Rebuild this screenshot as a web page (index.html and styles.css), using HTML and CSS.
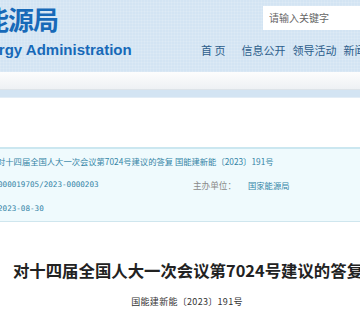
FILE: index.html
```html
<!DOCTYPE html>
<html lang="zh-CN">
<head>
<meta charset="UTF-8">
<meta name="viewport" content="width=device-width, initial-scale=1.0">
<title>对十四届全国人大一次会议第7024号建议的答复</title>
<link rel="stylesheet" href="styles.css">
</head>
<body>

<div class="header">
    <div class="logo">
        <div class="logo-cn">国家能源局</div>
        <div class="logo-en">National Energy Administration</div>
    </div>
    <div class="header-right">
        <div class="search">
            <input type="text" placeholder="请输入关键字">
        </div>
        <ul class="nav">
            <li class="nav-home">首 页</li>
            <li>信息公开</li>
            <li>领导活动</li>
            <li>新闻发布</li>
        </ul>
    </div>
</div>
<div class="band-white"></div>
<div class="band-blue"></div>

<div class="content">
    <div class="info-box">
        <div class="info-row info-full">对十四届全国人大一次会议第7024号建议的答复 国能建新能〔2023〕191号</div>
        <div class="info-row">
            <span class="info-value">000019705/2023-0000203</span>
            <span class="info-label">主办单位：</span>
            <span class="info-value">国家能源局</span>
        </div>
        <div class="info-row">
            <span class="info-value">2023-08-30</span>
        </div>
    </div>

    <h1 class="title">对十四届全国人大一次会议第7024号建议的答复</h1>
    <p class="doc-no">国能建新能〔2023〕191号</p>
</div>

</body>
</html>
```

FILE: styles.css
```css
/* Page base */
html, body {
    margin: 0;
    padding: 0;
    overflow: hidden;
    background: #fff;
}

body {
    font-family: "Noto Sans CJK SC", "Liberation Sans", sans-serif;
    color: #333;
}

/* Header */
.header {
    display: flex;
    height: 72px;
    background-color: #d3e4f3;
    background-image:
        repeating-linear-gradient(0deg, rgba(255,255,255,0.12) 0 1px, transparent 1px 3px),
        repeating-linear-gradient(90deg, rgba(255,255,255,0.12) 0 1px, transparent 1px 3px);
}

.logo {
    width: 200px;
    flex-shrink: 0;
    white-space: nowrap;
    color: #1769b8;
    font-weight: bold;
}

.logo-cn {
    margin: 2px 0 0 -67px;
    font-size: 26px;
    line-height: 34px;
    letter-spacing: -1px;
}

.logo-en {
    margin: 5px 0 0 -92px;
    font-family: "Liberation Sans", Arial, sans-serif;
    font-size: 15px;
    line-height: 18px;
}

.header-right {
    flex: 1;
    min-width: 0;
    white-space: nowrap;
}

.search {
    margin: 3px 0 0 63px;
}

.search input {
    box-sizing: border-box;
    width: 140px;
    height: 24px;
    border: none;
    outline: none;
    padding: 0 6px;
    background: #fff;
    font-family: "Noto Sans CJK SC", sans-serif;
    font-size: 10px;
}

.search input::placeholder {
    color: #666;
}

.nav {
    display: flex;
    gap: 7px;
    margin: 12px 0 0 1px;
    padding: 0;
    list-style: none;
    font-size: 11px;
    line-height: 16px;
    color: #2c5d8b;
}

.nav-home {
    margin-right: 9px;
}

/* Bands under the header */
.band-white {
    height: 18px;
    background: linear-gradient(#fdfdfd, #eef1f4);
    border-bottom: 1px solid #dde3e8;
    box-sizing: border-box;
}

.band-blue {
    height: 7px;
    background-color: #d3e4f3;
    border-bottom: 1px solid #e3edf6;
}

/* Content */
.content {
    padding-top: 49px;
}

.info-box {
    background-color: #effafd;
    border-top: 2px solid #cbe7f0;
    border-bottom: 1px solid #cfe6ee;
    font-size: 8.3px;
    color: #3384a6;
}

.info-row {
    display: flex;
    height: 24px;
    line-height: 24px;
    white-space: nowrap;
}

.info-full {
    margin-left: -3px;
}

.info-row .info-value:first-child {
    width: 195px;
    font-family: "DejaVu Sans Mono", monospace;
    font-size: 7.6px;
    margin-left: -2px;
}

.info-label {
    width: 55px;
    font-size: 8.6px;
    color: #8a8a8a;
}

.title {
    width: 376px;
    margin: 36px 0 0;
    font-size: 16.4px;
    line-height: 24px;
    text-align: center;
    white-space: nowrap;
    color: #222;
}

.doc-no {
    width: 374px;
    margin: 8px 0 0;
    font-size: 9px;
    line-height: 24px;
    letter-spacing: 0.3px;
    text-align: center;
    color: #333;
}
```
